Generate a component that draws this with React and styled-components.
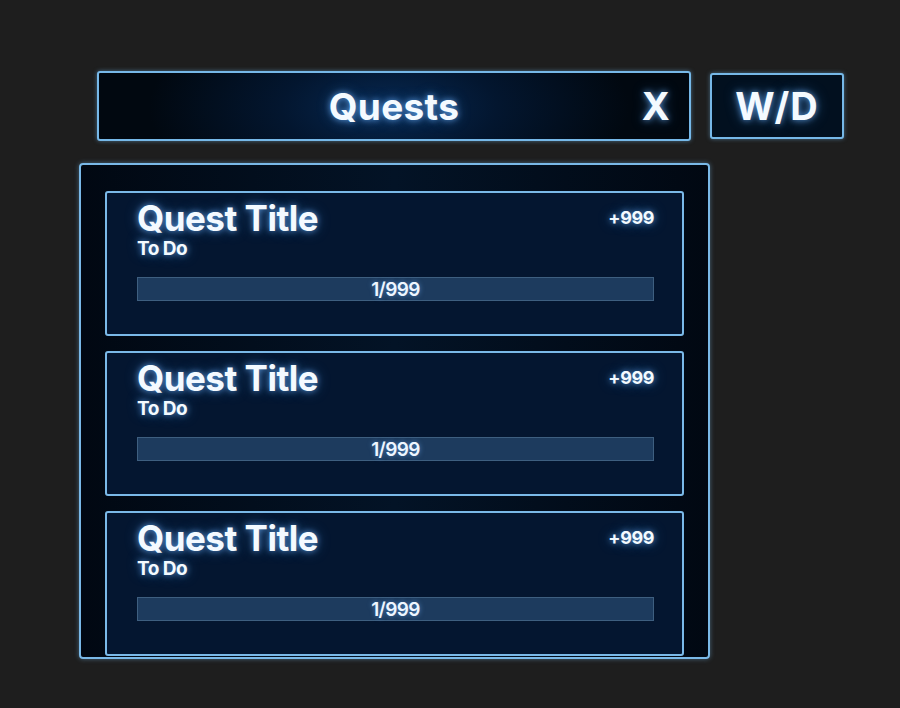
import styled, { createGlobalStyle } from "styled-components";

const GlobalStyle = createGlobalStyle`
  html, body {
    margin: 0;
    padding: 0;
    background: #1e1e1e;
    font-family: "Inter", "Noto Sans", sans-serif;
  }
`;

const Page = styled.div`
  width: 900px;
  height: 708px;
  padding: 71px 0 0 79px;
  box-sizing: border-box;
`;

const TopRow = styled.div`
  display: flex;
  align-items: center;
  gap: 19px;
  margin-left: 18px;
  width: 747px;
`;

const glow = "0 0 6px rgba(110, 180, 255, 0.75), 0 0 14px rgba(80, 150, 230, 0.45)";

const HeaderBar = styled.div`
  flex: none;
  width: 594px;
  height: 70px;
  box-sizing: border-box;
  border: 2px solid #76b8e8;
  border-radius: 3px;
  background: radial-gradient(ellipse 240px 110px at 290px 35px, #072851 0%, #03162f 45%, #010810 100%);
  box-shadow: 0 0 4px rgba(118, 184, 232, 0.5);
  display: flex;
  align-items: center;
  justify-content: center;
  position: relative;
  color: #f4faff;
  font-weight: 700;
  font-size: 37px;
  letter-spacing: 0.3px;
  text-shadow: ${glow};
`;

const Close = styled.span`
  position: absolute;
  right: 19px;
  top: 50%;
  transform: translateY(-50%);
  font-size: 38px;
`;

const WDButton = styled.div`
  width: 134px;
  height: 66px;
  box-sizing: border-box;
  border: 2px solid #76b8e8;
  border-radius: 3px;
  background: #02101f;
  box-shadow: 0 0 4px rgba(118, 184, 232, 0.5);
  display: flex;
  align-items: center;
  justify-content: center;
  color: #f4faff;
  font-weight: 700;
  font-size: 38px;
  letter-spacing: 1px;
  text-shadow: ${glow};
`;

const Panel = styled.div`
  margin-top: 22px;
  width: 631px;
  height: 496px;
  box-sizing: border-box;
  border: 2px solid #7ab9e8;
  border-radius: 4px;
  background: linear-gradient(90deg, #010812 0%, #031326 50%, #010812 100%);
  box-shadow: 0 0 5px rgba(122, 185, 232, 0.45);
  padding: 26px 24px 0 24px;
  display: flex;
  flex-direction: column;
  gap: 15px;
  overflow: hidden;
`;

const Card = styled.div`
  flex: none;
  height: 145px;
  box-sizing: border-box;
  border: 2px solid #7ab9e8;
  border-radius: 3px;
  background: #041630;
  padding: 5px 28px 0 30px;
  color: #f4faff;
  display: flex;
  flex-direction: column;
`;

const CardHead = styled.div`
  display: flex;
  justify-content: space-between;
  align-items: flex-start;
`;

const Title = styled.div`
  font-size: 35px;
  font-weight: 700;
  letter-spacing: -0.5px;
  line-height: 40px;
  text-shadow: ${glow};
`;

const Reward = styled.div`
  font-size: 18px;
  font-weight: 700;
  letter-spacing: -0.4px;
  margin-top: 9px;
  text-shadow: ${glow};
`;

const Status = styled.div`
  font-size: 19px;
  font-weight: 700;
  letter-spacing: -0.5px;
  line-height: 22px;
  text-shadow: ${glow};
`;

const Bar = styled.div`
  margin-top: 17px;
  height: 24px;
  box-sizing: border-box;
  border: 1px solid #3e5f80;
  background: #1d3b5e;
  display: flex;
  align-items: center;
  justify-content: center;
  font-size: 19px;
  font-weight: 600;
  letter-spacing: -0.6px;
  color: #eef6ff;
  text-shadow: 0 0 5px rgba(110, 180, 255, 0.6);
`;

const quests = [
  { title: "Quest Title", status: "To Do", reward: "+999", progress: "1/999" },
  { title: "Quest Title", status: "To Do", reward: "+999", progress: "1/999" },
  { title: "Quest Title", status: "To Do", reward: "+999", progress: "1/999" },
];

export default function App() {
  return (
    <>
      <GlobalStyle />
      <Page>
        <TopRow>
          <HeaderBar>
            Quests
            <Close>X</Close>
          </HeaderBar>
          <WDButton>W/D</WDButton>
        </TopRow>
        <Panel>
          {quests.map((q, i) => (
            <Card key={i}>
              <CardHead>
                <Title>{q.title}</Title>
                <Reward>{q.reward}</Reward>
              </CardHead>
              <Status>{q.status}</Status>
              <Bar>{q.progress}</Bar>
            </Card>
          ))}
        </Panel>
      </Page>
    </>
  );
}
